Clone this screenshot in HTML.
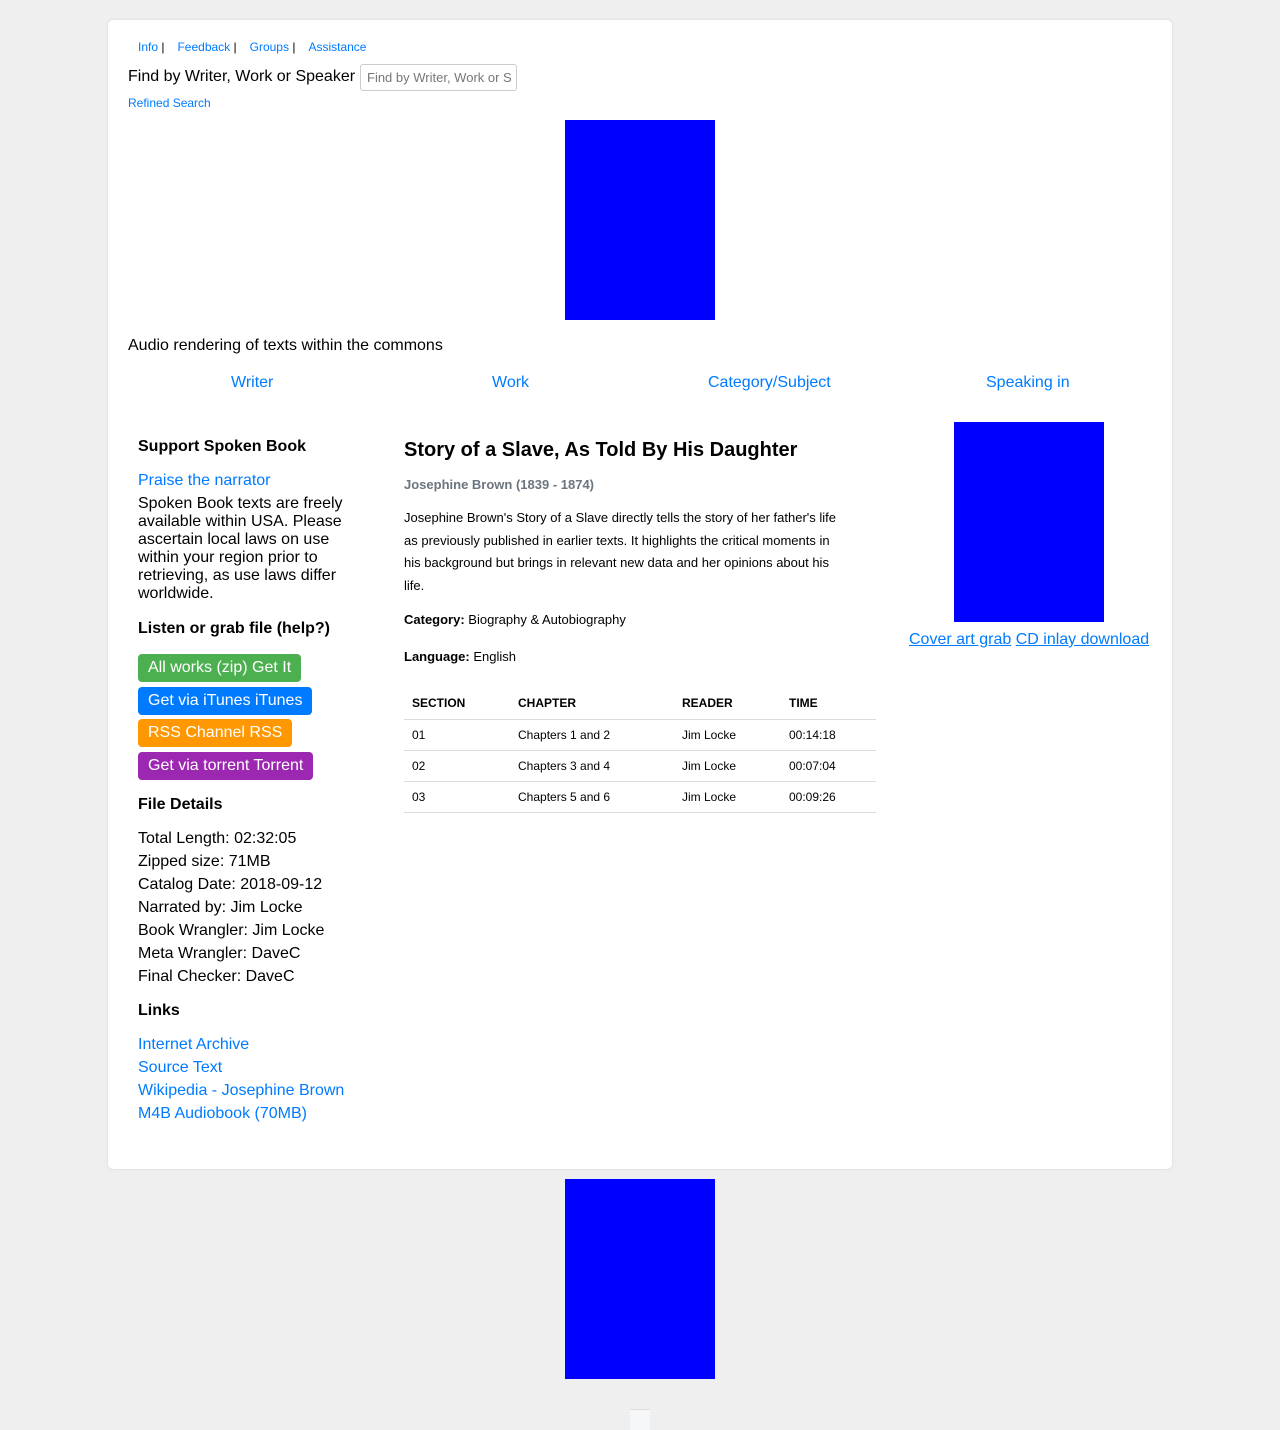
<!DOCTYPE html>
<html><head><meta charset="utf-8"><style>
*{box-sizing:border-box;margin:0;padding:0}
body{width:1280px;height:1430px;background:#efefef;font-family:"Liberation Sans",Arial,sans-serif;color:#000;position:relative;overflow:hidden}
a{color:#007bff;text-decoration:none}
.card{position:absolute;left:108px;top:20px;width:1064px;height:1149px;background:#fff;border-radius:5px;box-shadow:0 0 3px rgba(0,0,0,.1)}
.abs{position:absolute;white-space:nowrap}
.blue{background:#00f;position:absolute}
.btn{position:absolute;left:138px;height:28px;border-radius:4px;color:#fff;font-size:16px;line-height:28px;padding:0 10px}
h4{font-size:16px;font-weight:bold}
.l16{font-size:16px;line-height:23px}
table{border-collapse:collapse;font-size:12px}
td,th{text-align:left;height:31px;padding-left:8px;border-bottom:1px solid #ddd}
th{font-weight:bold;height:32px;border-bottom:1px solid #ddd}
</style></head><body>
<div class="card"></div>
<div class="abs" style="left:138px;top:40px;font-size:12px"><a href="#">Info</a> |<a href="#" style="margin-left:13px">Feedback</a> |<a href="#" style="margin-left:13px">Groups</a> |<a href="#" style="margin-left:13px">Assistance</a></div>
<div class="abs" style="left:128px;top:68px;font-size:16px">Find by Writer, Work or Speaker</div>
<div class="abs" style="left:360px;top:64px;width:157px;height:27px;border:1px solid #ccc;border-radius:3px;font-size:13px;color:#777;padding:5px 6px;overflow:hidden">Find by Writer, Work or S</div>
<div class="abs" style="left:128px;top:96px;font-size:12px"><a href="#">Refined Search</a></div>
<div class="blue" style="left:565px;top:120px;width:150px;height:200px"></div>
<div class="abs" style="left:128px;top:337px;font-size:16px">Audio rendering of texts within the commons</div>
<div class="abs" style="left:231px;top:374px;font-size:16px"><a href="#">Writer</a></div>
<div class="abs" style="left:492px;top:374px;font-size:16px"><a href="#">Work</a></div>
<div class="abs" style="left:708px;top:374px;font-size:16px"><a href="#">Category/Subject</a></div>
<div class="abs" style="left:986px;top:374px;font-size:16px"><a href="#">Speaking in</a></div>

<h4 class="abs" style="left:138px;top:438px">Support Spoken Book</h4>
<div class="abs" style="left:138px;top:472px;font-size:16px"><a href="#">Praise the narrator</a></div>
<div class="abs" style="left:138px;top:495px;white-space:normal;width:220px;font-size:16px;line-height:18px">Spoken Book texts are freely available within USA. Please ascertain local laws on use within your region prior to retrieving, as use laws differ worldwide.</div>
<h4 class="abs" style="left:138px;top:620px">Listen or grab file (help?)</h4>
<div class="btn" style="top:654px;background:#4caf50">All works (zip) Get It</div>
<div class="btn" style="top:687px;background:#007bff">Get via iTunes iTunes</div>
<div class="btn" style="top:719px;background:#ff9800">RSS Channel RSS</div>
<div class="btn" style="top:752px;background:#9c27b0">Get via torrent Torrent</div>
<h4 class="abs" style="left:138px;top:796px">File Details</h4>
<div class="abs l16" style="left:138px;top:827px">Total Length: 02:32:05<br>Zipped size: 71MB<br>Catalog Date: 2018-09-12<br>Narrated by: Jim Locke<br>Book Wrangler: Jim Locke<br>Meta Wrangler: DaveC<br>Final Checker: DaveC</div>
<h4 class="abs" style="left:138px;top:1002px">Links</h4>
<div class="abs l16" style="left:138px;top:1033px"><a href="#">Internet Archive</a><br><a href="#">Source Text</a><br><a href="#">Wikipedia - Josephine Brown</a><br><a href="#">M4B Audiobook (70MB)</a></div>

<div class="abs" style="left:404px;top:439px;font-size:20px;font-weight:bold">Story of a Slave, As Told By His Daughter</div>
<div class="abs" style="left:404px;top:477px;font-size:13px;font-weight:bold;color:#6c757d">Josephine Brown (1839 - 1874)</div>
<div class="abs" style="left:404px;top:507px;font-size:13px;line-height:22.5px">Josephine Brown's Story of a Slave directly tells the story of her father's life<br>as previously published in earlier texts. It highlights the critical moments in<br>his background but brings in relevant new data and her opinions about his<br>life.</div>
<div class="abs" style="left:404px;top:612px;font-size:13px"><b>Category:</b> Biography &amp; Autobiography</div>
<div class="abs" style="left:404px;top:649px;font-size:13px"><b>Language:</b> English</div>
<table class="abs" style="left:404px;top:687px;width:472px">
<tr><th style="width:106px">SECTION</th><th style="width:164px">CHAPTER</th><th style="width:107px">READER</th><th>TIME</th></tr>
<tr><td>01</td><td>Chapters 1 and 2</td><td>Jim Locke</td><td>00:14:18</td></tr>
<tr><td>02</td><td>Chapters 3 and 4</td><td>Jim Locke</td><td>00:07:04</td></tr>
<tr><td>03</td><td>Chapters 5 and 6</td><td>Jim Locke</td><td>00:09:26</td></tr>
</table>

<div class="blue" style="left:954px;top:422px;width:150px;height:200px"></div>
<div class="abs" style="left:909px;top:631px;font-size:16px"><a href="#" style="text-decoration:underline">Cover art grab</a> <a href="#" style="text-decoration:underline">CD inlay download</a></div>

<div class="blue" style="left:565px;top:1179px;width:150px;height:200px"></div>
<div class="abs" style="left:630px;top:1409px;width:20px;height:21px;background:#f6f7f9;border-top:1px solid #ddd"></div>
</body></html>
